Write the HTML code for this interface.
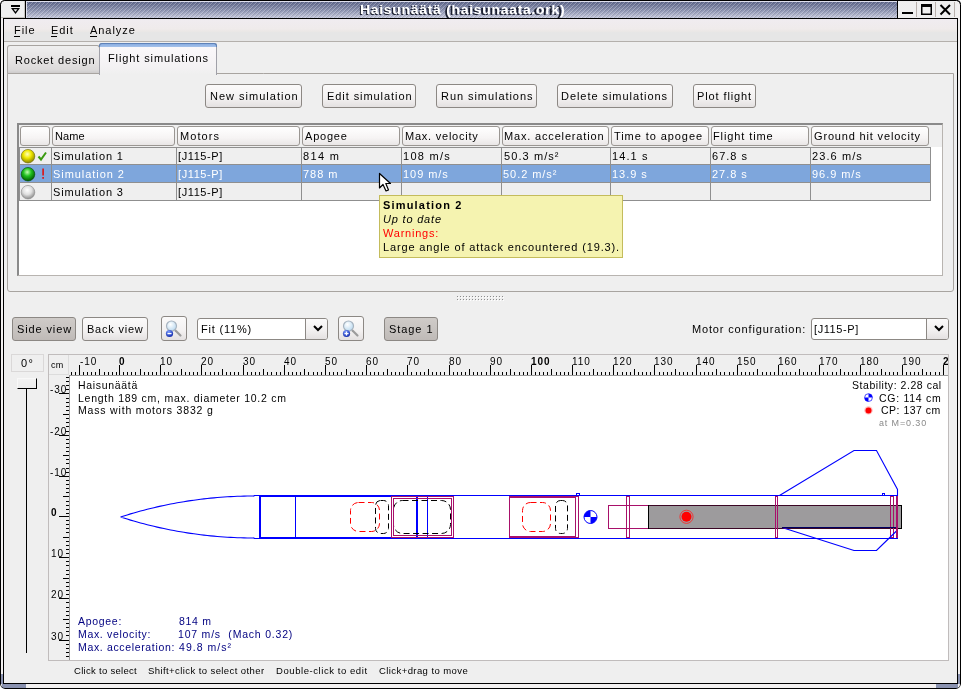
<!DOCTYPE html>
<html><head><meta charset="utf-8"><style>
*{box-sizing:border-box;margin:0;padding:0}
html,body{width:961px;height:689px;overflow:hidden;background:#efefef;position:relative;font-family:"Liberation Sans",sans-serif;color:#000}
.a{position:absolute}
.t{will-change:transform;position:absolute;white-space:nowrap;font-size:11px;line-height:13px;letter-spacing:0.95px}
.blk{position:absolute;background:#000}
.btn{position:absolute;border:1px solid #8c8884;border-radius:3px;background:linear-gradient(#fbfafa,#f3f1f1 60%,#e4e1e1)}
.btnp{position:absolute;border:1px solid #8c8884;border-radius:3px;background:linear-gradient(#cfcbc8,#c6c2bf 60%,#bfbab7)}
.hdr{position:absolute;top:126px;height:20px;border:1px solid #9a9692;border-radius:3px;background:linear-gradient(#ffffff,#f6f4f4 60%,#e9e6e6)}
.vl{position:absolute;width:1px;background:#8f8f8f}
.hl{position:absolute;height:1px;background:#8f8f8f}
.rl{will-change:transform;position:absolute;white-space:nowrap;font-size:10px;line-height:11px;letter-spacing:0.9px}
.fig{will-change:transform;position:absolute;white-space:nowrap;font-size:10.5px;line-height:12px;letter-spacing:0.4px}
</style></head><body>

<!-- window frame -->
<div class="a" style="left:0;top:0;width:961px;height:689px;background:#efefef"></div>
<svg class="a" style="left:0;top:0" width="961" height="689" shape-rendering="crispEdges">
 <rect x="0" y="0" width="961" height="689" fill="#f2f0f0"/>
 <rect x="1" y="674" width="2" height="10" fill="#8a92b0"/>
 <rect x="2" y="684" width="24" height="4" fill="#8a92b0"/>
 <rect x="958" y="674" width="2" height="10" fill="#8a92b0"/>
 <rect x="936" y="684" width="22" height="4" fill="#8a92b0"/>
 <rect x="5" y="0" width="951" height="1" fill="#000"/>
 <rect x="0" y="5" width="1" height="679" fill="#000"/>
 <rect x="960" y="5" width="1" height="679" fill="#000"/>
 <rect x="5" y="688" width="951" height="1" fill="#000"/>
 <rect x="3" y="18" width="1" height="666" fill="#000"/>
 <rect x="957" y="18" width="1" height="666" fill="#000"/>
 <rect x="3" y="18" width="955" height="1" fill="#000"/>
 <rect x="3" y="683" width="955" height="1" fill="#000"/>
</svg>
<svg class="a" style="left:0;top:0" width="961" height="689">
 <path d="M0.5,5 Q0.5,0.5 5,0.5" stroke="#000" fill="none"/>
 <path d="M956,0.5 Q960.5,0.5 960.5,5" stroke="#000" fill="none"/>
 <path d="M0.5,684 Q0.5,688.5 5,688.5" stroke="#000" fill="none"/>
 <path d="M956,688.5 Q960.5,688.5 960.5,684" stroke="#000" fill="none"/>
 <path d="M0,0 H5 Q0.5,0.5 0,5 Z M961,0 H956 Q960.5,0.5 961,5 Z M0,689 H5 Q0.5,688.5 0,684 Z M961,689 H956 Q960.5,688.5 961,684 Z" fill="#fff"/>
</svg>
<div class="a" style="left:4px;top:19px;width:953px;height:664px;background:#efefef"></div>

<!-- title bar -->
<div class="a" style="left:1px;top:1px;width:24px;height:17px;background:#efefef;border-right:1px solid #c8c4c0;border-bottom:1px solid #c8c4c0"></div>
<div class="blk" style="left:25px;top:1px;width:1px;height:17px"></div>
<div class="a" style="left:26px;top:1px;width:871px;height:17px;background:linear-gradient(#5a6388,#8990ae 50%,#c6c9dc)"></div>
<svg class="a" style="left:26px;top:1px" width="871" height="17"><defs><pattern id="hp" width="4" height="4" patternUnits="userSpaceOnUse"><rect x="3" y="0" width="1" height="1" fill="#fff" fill-opacity=".25"/><rect x="2" y="1" width="1" height="1" fill="#fff" fill-opacity=".25"/><rect x="1" y="2" width="1" height="1" fill="#fff" fill-opacity=".25"/><rect x="0" y="3" width="1" height="1" fill="#fff" fill-opacity=".25"/><rect x="0" y="0" width="1" height="1" fill="#000" fill-opacity=".10"/><rect x="3" y="1" width="1" height="1" fill="#000" fill-opacity=".10"/><rect x="2" y="2" width="1" height="1" fill="#000" fill-opacity=".10"/><rect x="1" y="3" width="1" height="1" fill="#000" fill-opacity=".10"/></pattern></defs><rect width="871" height="17" fill="url(#hp)"/><rect x="0" y="0" width="871" height="1" fill="#dfe0ee"/><rect x="0" y="0" width="1" height="17" fill="#dfe0ee"/></svg>
<div class="blk" style="left:897px;top:1px;width:1px;height:17px"></div>
<div class="a" style="left:898px;top:1px;width:59px;height:17px;background:#efefef"></div>
<div class="a" style="left:916px;top:2px;width:1px;height:15px;background:#b8b0ac"></div>
<div class="a" style="left:935px;top:2px;width:1px;height:15px;background:#b8b0ac"></div>
<div class="a" style="left:954px;top:2px;width:1px;height:15px;background:#b8b0ac"></div>

<!-- title glyphs -->
<svg class="a" style="left:0;top:0" width="30" height="19">
 <path d="M0.5,4.5 Q0.5,0.5 4.5,0.5" stroke="#000" fill="none"/>
 <rect x="11" y="5" width="9" height="2" fill="#000"/>
 <path d="M11,8 L20,8 L15.5,14 Z" fill="#000"/>
 <path d="M13.5,9.3 L17.5,9.3 L15.5,11.8 Z" fill="#efefef"/>
</svg>
<svg class="a" style="left:895px;top:0" width="66" height="19">
 <path d="M62,0.5 Q65.5,0.5 65.5,4" stroke="#000" fill="none"/>
 <rect x="7" y="12" width="11" height="2" fill="#000"/>
 <rect x="26" y="4" width="11" height="11" fill="#000"/>
 <rect x="27.5" y="7" width="8" height="6.5" fill="#efefef"/>
 <path d="M45.5,5 L55,14.5 M55,5 L45.5,14.5" stroke="#000" stroke-width="2"/>
</svg>
<div id="x1" class="t" style="left:359px;top:4px;font-weight:bold;font-size:12px;line-height:14px;letter-spacing:0.542px;color:#1c2030;transform:scaleX(1.165);transform-origin:0 0">Haisunäätä (haisunaata.ork)</div>
<div id="x2" class="t" style="left:360px;top:3px;font-weight:bold;font-size:12px;line-height:14px;letter-spacing:0.6px;color:#fff;transform:scaleX(1.165);transform-origin:0 0">Haisunäätä (haisunaata.ork)</div>

<!-- menu bar -->
<div class="a" style="left:4px;top:19px;width:953px;height:22px;background:linear-gradient(#f0ecf0,#efebeb 45%,#ebe8e6 55%,#e6e6e6 62%,#e6e6e6)"></div>
<div class="a" style="left:4px;top:41px;width:953px;height:1px;background:#b4b0ac"></div>
<div id="x3" class="t" style="left:14px;top:24px">File</div>
<div class="a" style="left:14px;top:36px;width:6px;height:1px;background:#000"></div>
<div id="x4" class="t" style="left:51px;top:24px">Edit</div>
<div class="a" style="left:51px;top:36px;width:6px;height:1px;background:#000"></div>
<div id="x5" class="t" style="left:90px;top:24px">Analyze</div>
<div class="a" style="left:90px;top:36px;width:7px;height:1px;background:#000"></div>

<!-- tabs -->
<div class="a" style="left:7px;top:45px;width:93px;height:29px;border:1px solid #a8a4a0;border-bottom:none;border-radius:3px 3px 0 0;background:linear-gradient(#efefef,#e6e4e4 50%,#dcdada 85%,#c9c7c7)"></div>
<div id="x6" class="t" style="left:15px;top:54px;letter-spacing:0.825px">Rocket design</div>
<!-- panel -->
<div class="a" style="left:7px;top:73px;width:947px;height:219px;border:1px solid #a8a4a0;border-top:1px solid #a8a4a0;border-radius:0 0 3px 3px;background:#efefef"></div>
<div class="a" style="left:99px;top:43px;width:118px;height:32px;border:1px solid #a0a0a8;border-bottom:none;border-radius:3px 3px 0 0;background:linear-gradient(#fbf9fb,#f4f2f4 70%,#efefef)"></div>
<div class="a" style="left:99px;top:43px;width:118px;height:4px;border:1px solid #5f82b8;border-bottom:none;border-radius:3px 3px 0 0;background:linear-gradient(#8aaee2,#a6c2ea)"></div>
<div id="x7" class="t" style="left:108px;top:52px;letter-spacing:0.891px">Flight simulations</div>

<!-- buttons -->
<div class="btn" style="left:205px;top:84px;width:97px;height:24px"></div>
<div id="x8" class="t" style="left:210px;top:90px;letter-spacing:1.003px">New simulation</div>
<div class="btn" style="left:322px;top:84px;width:94px;height:24px"></div>
<div id="x9" class="t" style="left:327px;top:90px;letter-spacing:0.932px">Edit simulation</div>
<div class="btn" style="left:436px;top:84px;width:101px;height:24px"></div>
<div id="x10" class="t" style="left:441px;top:90px;letter-spacing:0.942px">Run simulations</div>
<div class="btn" style="left:557px;top:84px;width:116px;height:24px"></div>
<div id="x11" class="t" style="left:561px;top:90px;letter-spacing:0.950px">Delete simulations</div>
<div class="btn" style="left:693px;top:84px;width:63px;height:24px"></div>
<div id="x12" class="t" style="left:697px;top:90px;letter-spacing:0.890px">Plot flight</div>
<!-- table -->
<div class="a" style="left:17px;top:123px;width:926px;height:153px;background:#fff;border-left:2px solid #8a8a8a;border-top:2px solid #8a8a8a;border-right:1px solid #b8b4b0;border-bottom:1px solid #b8b4b0"></div>
<div class="a" style="left:19px;top:125px;width:923px;height:22px;background:#efefef"></div>
<div class="hdr" style="left:20px;width:30px"></div>
<div class="hdr" style="left:52px;width:123px"></div>
<div id="x13" class="t" style="left:55px;top:130px;letter-spacing:0.117px">Name</div>
<div class="hdr" style="left:177px;width:123px"></div>
<div id="x14" class="t" style="left:180px;top:130px;letter-spacing:1.090px">Motors</div>
<div class="hdr" style="left:302px;width:98px"></div>
<div id="x15" class="t" style="left:305px;top:130px;letter-spacing:0.790px">Apogee</div>
<div class="hdr" style="left:402px;width:98px"></div>
<div id="x16" class="t" style="left:405px;top:130px;letter-spacing:0.767px">Max. velocity</div>
<div class="hdr" style="left:502px;width:107px"></div>
<div id="x17" class="t" style="left:504px;top:130px;letter-spacing:0.831px">Max. acceleration</div>
<div class="hdr" style="left:611px;width:98px"></div>
<div id="x18" class="t" style="left:614px;top:130px;letter-spacing:0.926px">Time to apogee</div>
<div class="hdr" style="left:711px;width:98px"></div>
<div id="x19" class="t" style="left:713px;top:130px;letter-spacing:0.900px">Flight time</div>
<div class="hdr" style="left:811px;width:118px"></div>
<div id="x20" class="t" style="left:814px;top:130px;letter-spacing:0.834px">Ground hit velocity</div>
<div class="a" style="left:19px;top:147px;width:912px;height:18px;background:#efefef"></div>
<div id="x21" class="t" style="left:53px;top:150px;color:#000;letter-spacing:0.849px">Simulation 1</div>
<div id="x22" class="t" style="left:178px;top:150px;color:#000;letter-spacing:0.593px">[J115-P]</div>
<div id="x23" class="t" style="left:303px;top:150px;color:#000;letter-spacing:1.350px">814 m</div>
<div id="x24" class="t" style="left:403px;top:150px;color:#000;letter-spacing:1.283px">108 m/s</div>
<div id="x25" class="t" style="left:504px;top:150px;color:#000;letter-spacing:1.086px">50.3 m/s²</div>
<div id="x26" class="t" style="left:612px;top:150px;color:#000;letter-spacing:1.110px">14.1 s</div>
<div id="x27" class="t" style="left:712px;top:150px;color:#000;letter-spacing:1.010px">67.8 s</div>
<div id="x28" class="t" style="left:812px;top:150px;color:#000;letter-spacing:1.093px">23.6 m/s</div>
<div class="a" style="left:19px;top:165px;width:912px;height:18px;background:#7ea6dc"></div>
<div id="x29" class="t" style="left:53px;top:168px;color:#fff;letter-spacing:0.940px">Simulation 2</div>
<div id="x30" class="t" style="left:178px;top:168px;color:#fff;letter-spacing:0.593px">[J115-P]</div>
<div id="x31" class="t" style="left:303px;top:168px;color:#fff">788 m</div>
<div id="x32" class="t" style="left:403px;top:168px;color:#fff">109 m/s</div>
<div id="x33" class="t" style="left:503px;top:168px;color:#fff">50.2 m/s²</div>
<div id="x34" class="t" style="left:612px;top:168px;color:#fff">13.9 s</div>
<div id="x35" class="t" style="left:712px;top:168px;color:#fff">27.8 s</div>
<div id="x36" class="t" style="left:812px;top:168px;color:#fff">96.9 m/s</div>
<div class="a" style="left:19px;top:183px;width:912px;height:18px;background:#efefef"></div>
<div id="x37" class="t" style="left:53px;top:186px;color:#000;letter-spacing:0.849px">Simulation 3</div>
<div id="x38" class="t" style="left:178px;top:186px;color:#000;letter-spacing:0.593px">[J115-P]</div>
<div class="hl" style="left:19px;top:147px;width:912px"></div>
<div class="hl" style="left:19px;top:164px;width:912px"></div>
<div class="hl" style="left:19px;top:182px;width:912px"></div>
<div class="hl" style="left:19px;top:200px;width:912px"></div>
<div class="vl" style="left:51px;top:147px;height:54px"></div>
<div class="vl" style="left:176px;top:147px;height:54px"></div>
<div class="vl" style="left:301px;top:147px;height:54px"></div>
<div class="vl" style="left:401px;top:147px;height:54px"></div>
<div class="vl" style="left:501px;top:147px;height:54px"></div>
<div class="vl" style="left:610px;top:147px;height:54px"></div>
<div class="vl" style="left:710px;top:147px;height:54px"></div>
<div class="vl" style="left:810px;top:147px;height:54px"></div>
<div class="vl" style="left:930px;top:147px;height:54px"></div>
<div class="vl" style="left:19px;top:147px;height:54px"></div>

<!-- status icons -->
<svg class="a" style="left:19px;top:147px" width="32" height="54">
 <defs>
  <radialGradient id="gy" cx="0.45" cy="0.35" r="0.65"><stop offset="0" stop-color="#ffffc0"/><stop offset="0.45" stop-color="#f0e800"/><stop offset="1" stop-color="#8a8400"/></radialGradient>
  <radialGradient id="gg" cx="0.45" cy="0.35" r="0.65"><stop offset="0" stop-color="#c0ffb0"/><stop offset="0.45" stop-color="#20c020"/><stop offset="1" stop-color="#005a00"/></radialGradient>
  <radialGradient id="gw" cx="0.45" cy="0.35" r="0.65"><stop offset="0" stop-color="#ffffff"/><stop offset="0.5" stop-color="#e0e0e0"/><stop offset="1" stop-color="#8c8c8c"/></radialGradient>
 </defs>
 <circle cx="9" cy="9.2" r="6.8" fill="url(#gy)" stroke="#6a6600" stroke-width="0.6"/>
 <circle cx="9" cy="27.2" r="6.8" fill="url(#gg)" stroke="#004a00" stroke-width="0.6"/>
 <circle cx="9" cy="45.2" r="6.8" fill="url(#gw)" stroke="#8a8a8a" stroke-width="0.6"/>
 <path d="M19.5,9.5 L22,12.5 L27,5.5" stroke="#3a9a10" stroke-width="2" fill="none"/>
 <rect x="23.3" y="21.5" width="1.6" height="7" fill="#e01010"/>
 <rect x="23.3" y="30" width="1.6" height="1.8" fill="#e01010"/>
</svg>

<!-- tooltip -->
<div class="a" style="left:379px;top:195px;width:244px;height:63px;background:#f5f3b0;border:1px solid #c4bc5c"></div>
<div id="x39" class="t" style="left:383px;top:199px;font-weight:bold;letter-spacing:1.182px">Simulation 2</div>
<div id="x40" class="t" style="left:383px;top:213px;font-style:italic;letter-spacing:0.806px">Up to date</div>
<div id="x41" class="t" style="left:383px;top:227px;color:#ff0000;letter-spacing:0.775px">Warnings:</div>
<div id="x42" class="t" style="left:383px;top:241px;letter-spacing:0.859px">Large angle of attack encountered (19.3).</div>

<!-- cursor -->
<svg class="a" style="left:378px;top:172px" width="16" height="22">
 <path d="M1.5,1.5 L1.5,16 L5,12.5 L8,19 L10.5,18 L7.8,11.5 L12.5,11.5 Z" fill="#fff" stroke="#000" stroke-width="1.2" stroke-linejoin="round"/>
</svg>

<!-- splitter dots -->
<svg class="a" style="left:457px;top:296px" width="48" height="6">
 <defs><pattern id="dp" width="3" height="3" patternUnits="userSpaceOnUse"><rect x="0" y="0" width="1" height="1" fill="#8c8c8c"/><rect x="1" y="1" width="1" height="1" fill="#fff"/></pattern></defs>
 <rect x="0" y="0" width="48" height="5" fill="url(#dp)"/>
</svg>

<!-- toolbar -->
<div class="btnp" style="left:12px;top:317px;width:64px;height:24px"></div>
<div id="x43" class="t" style="left:17px;top:323px;letter-spacing:0.875px">Side view</div>
<div class="btn" style="left:82px;top:317px;width:66px;height:24px"></div>
<div id="x44" class="t" style="left:87px;top:323px;letter-spacing:0.775px">Back view</div>
<div class="btn" style="left:161px;top:316px;width:26px;height:25px"></div>
<div class="a" style="left:197px;top:318px;width:131px;height:22px;border:1px solid #8c8884;border-radius:3px;background:#fff"></div>
<div class="a" style="left:305px;top:319px;width:22px;height:20px;border-left:1px solid #8c8884;border-radius:0 2px 2px 0;background:linear-gradient(#fbfafa,#f1efef 60%,#e4e1e1)"></div>
<svg class="a" style="left:311px;top:323px" width="14" height="10"><path d="M3,3 L7,7 L11,3" stroke="#000" stroke-width="2" fill="none"/></svg>
<div id="x45" class="t" style="left:201px;top:323px;letter-spacing:0.8px">Fit (11%)</div>
<div class="btn" style="left:338px;top:316px;width:26px;height:25px"></div>
<div class="btnp" style="left:384px;top:317px;width:54px;height:24px"></div>
<div id="x46" class="t" style="left:389px;top:323px;letter-spacing:0.933px">Stage 1</div>
<div id="x47" class="t" style="left:692px;top:323px;letter-spacing:0.845px">Motor configuration:</div>
<div class="a" style="left:811px;top:318px;width:138px;height:22px;border:1px solid #8c8884;border-radius:3px;background:#fff"></div>
<div class="a" style="left:926px;top:319px;width:22px;height:20px;border-left:1px solid #8c8884;border-radius:0 2px 2px 0;background:linear-gradient(#fbfafa,#f1efef 60%,#e4e1e1)"></div>
<svg class="a" style="left:932px;top:323px" width="14" height="10"><path d="M3,3 L7,7 L11,3" stroke="#000" stroke-width="2" fill="none"/></svg>
<div id="x48" class="t" style="left:814px;top:323px;letter-spacing:0.586px">[J115-P]</div>
<svg class="a" style="left:161px;top:316px" width="26" height="25">
 <defs><radialGradient id="gl" cx="0.4" cy="0.35" r="0.7"><stop offset="0" stop-color="#ffffff"/><stop offset="1" stop-color="#b8d8f0"/></radialGradient>
 <radialGradient id="gb" cx="0.4" cy="0.3" r="0.8"><stop offset="0" stop-color="#80a0ff"/><stop offset="1" stop-color="#0018a0"/></radialGradient></defs>
 <path d="M14.5,14.5 L19.5,19.5" stroke="#9c9c9c" stroke-width="2.2" stroke-linecap="round"/>
 <circle cx="10.5" cy="10" r="5" fill="url(#gl)" stroke="#a8b4c0" stroke-width="1.2"/>
 <circle cx="8.5" cy="17.5" r="3.6" fill="url(#gb)"/>
 <rect x="6.5" y="17" width="4" height="1.2" fill="#fff"/>
</svg>
<svg class="a" style="left:338px;top:316px" width="26" height="25">
 <path d="M14.5,14.5 L19.5,19.5" stroke="#9c9c9c" stroke-width="2.2" stroke-linecap="round"/>
 <circle cx="10.5" cy="10" r="5" fill="url(#gl)" stroke="#a8b4c0" stroke-width="1.2"/>
 <circle cx="8.5" cy="17.5" r="3.6" fill="url(#gb)"/>
 <rect x="6.5" y="17" width="4" height="1.2" fill="#fff"/>
 <rect x="7.9" y="15.5" width="1.2" height="4" fill="#fff"/>
</svg>

<!-- angle box & slider -->
<div class="a" style="left:11px;top:354px;width:33px;height:18px;border:1px solid #dad8d8;background:#efefef"></div>
<div id="x49" class="t" style="left:21px;top:357px;letter-spacing:1.3px">0°</div>
<div class="a" style="left:26px;top:378px;width:1px;height:275px;background:#000"></div>
<div class="a" style="left:17px;top:378px;width:20px;height:11px;background:linear-gradient(#f2f2f2,#ececec);border-right:1px solid #000;border-bottom:1px solid #000;border-top:1px solid #f8f8f8;border-left:1px solid #f8f8f8"></div>

<!-- ruler frame -->
<div class="a" style="left:48px;top:354px;width:901px;height:307px;border:1px solid #c0bcbc;background:#efefef"></div>
<div class="a" style="left:70px;top:376px;width:878px;height:284px;background:#fff"></div>
<div class="a" style="left:69px;top:375px;width:879px;height:1px;background:#999"></div>
<div class="a" style="left:69px;top:375px;width:1px;height:285px;background:#999"></div>
<div class="a" style="left:68px;top:355px;width:1px;height:20px;background:#dcdcdc"></div>
<div class="a" style="left:49px;top:374px;width:20px;height:1px;background:#dcdcdc"></div>
<div id="x50" class="t" style="left:51px;top:359px;font-size:9px;letter-spacing:0.2px">cm</div>
<!-- rulers -->
<svg class="a" style="left:0;top:0" width="961" height="689" shape-rendering="crispEdges">
<path d="M71.5,372V375 M75.5,372V375 M79.5,365V375 M83.5,372V375 M87.5,372V375 M91.5,372V375 M95.5,372V375 M99.5,369V375 M104.5,372V375 M108.5,372V375 M112.5,372V375 M116.5,372V375 M119.5,365V375 M123.5,372V375 M127.5,372V375 M131.5,372V375 M135.5,372V375 M140.5,369V375 M144.5,372V375 M148.5,372V375 M152.5,372V375 M156.5,372V375 M160.5,365V375 M164.5,372V375 M168.5,372V375 M173.5,372V375 M177.5,372V375 M181.5,369V375 M185.5,372V375 M189.5,372V375 M193.5,372V375 M197.5,372V375 M201.5,365V375 M205.5,372V375 M210.5,372V375 M214.5,372V375 M218.5,372V375 M222.5,369V375 M226.5,372V375 M230.5,372V375 M234.5,372V375 M238.5,372V375 M243.5,365V375 M247.5,372V375 M251.5,372V375 M255.5,372V375 M259.5,372V375 M263.5,369V375 M267.5,372V375 M271.5,372V375 M276.5,372V375 M280.5,372V375 M284.5,365V375 M288.5,372V375 M292.5,372V375 M296.5,372V375 M300.5,372V375 M304.5,369V375 M308.5,372V375 M313.5,372V375 M317.5,372V375 M321.5,372V375 M325.5,365V375 M329.5,372V375 M333.5,372V375 M337.5,372V375 M341.5,372V375 M346.5,369V375 M350.5,372V375 M354.5,372V375 M358.5,372V375 M362.5,372V375 M366.5,365V375 M370.5,372V375 M374.5,372V375 M378.5,372V375 M383.5,372V375 M387.5,369V375 M391.5,372V375 M395.5,372V375 M399.5,372V375 M403.5,372V375 M407.5,365V375 M411.5,372V375 M416.5,372V375 M420.5,372V375 M424.5,372V375 M428.5,369V375 M432.5,372V375 M436.5,372V375 M440.5,372V375 M444.5,372V375 M449.5,365V375 M453.5,372V375 M457.5,372V375 M461.5,372V375 M465.5,372V375 M469.5,369V375 M473.5,372V375 M477.5,372V375 M481.5,372V375 M486.5,372V375 M490.5,365V375 M494.5,372V375 M498.5,372V375 M502.5,372V375 M506.5,372V375 M510.5,369V375 M514.5,372V375 M519.5,372V375 M523.5,372V375 M527.5,372V375 M531.5,365V375 M535.5,372V375 M539.5,372V375 M543.5,372V375 M547.5,372V375 M551.5,369V375 M556.5,372V375 M560.5,372V375 M564.5,372V375 M568.5,372V375 M572.5,365V375 M576.5,372V375 M580.5,372V375 M584.5,372V375 M589.5,372V375 M593.5,369V375 M597.5,372V375 M601.5,372V375 M605.5,372V375 M609.5,372V375 M613.5,365V375 M617.5,372V375 M622.5,372V375 M626.5,372V375 M630.5,372V375 M634.5,369V375 M638.5,372V375 M642.5,372V375 M646.5,372V375 M650.5,372V375 M654.5,365V375 M659.5,372V375 M663.5,372V375 M667.5,372V375 M671.5,372V375 M675.5,369V375 M679.5,372V375 M683.5,372V375 M687.5,372V375 M692.5,372V375 M696.5,365V375 M700.5,372V375 M704.5,372V375 M708.5,372V375 M712.5,372V375 M716.5,369V375 M720.5,372V375 M724.5,372V375 M729.5,372V375 M733.5,372V375 M737.5,365V375 M741.5,372V375 M745.5,372V375 M749.5,372V375 M753.5,372V375 M757.5,369V375 M762.5,372V375 M766.5,372V375 M770.5,372V375 M774.5,372V375 M778.5,365V375 M782.5,372V375 M786.5,372V375 M790.5,372V375 M795.5,372V375 M799.5,369V375 M803.5,372V375 M807.5,372V375 M811.5,372V375 M815.5,372V375 M819.5,365V375 M823.5,372V375 M827.5,372V375 M832.5,372V375 M836.5,372V375 M840.5,369V375 M844.5,372V375 M848.5,372V375 M852.5,372V375 M856.5,372V375 M860.5,365V375 M865.5,372V375 M869.5,372V375 M873.5,372V375 M877.5,372V375 M881.5,369V375 M885.5,372V375 M889.5,372V375 M893.5,372V375 M897.5,372V375 M902.5,365V375 M906.5,372V375 M910.5,372V375 M914.5,372V375 M918.5,372V375 M922.5,369V375 M926.5,372V375 M930.5,372V375 M935.5,372V375 M939.5,372V375 M943.5,365V375" stroke="#000" stroke-width="1" fill="none"/>
<path d="M66,377.5H69 M66,381.5H69 M66,385.5H69 M66,389.5H69 M59,393.5H69 M66,398.5H69 M66,402.5H69 M66,406.5H69 M66,410.5H69 M63,414.5H69 M66,418.5H69 M66,422.5H69 M66,426.5H69 M66,431.5H69 M59,435.5H69 M66,439.5H69 M66,443.5H69 M66,447.5H69 M66,451.5H69 M63,455.5H69 M66,459.5H69 M66,463.5H69 M66,468.5H69 M66,472.5H69 M59,476.5H69 M66,480.5H69 M66,484.5H69 M66,488.5H69 M66,492.5H69 M63,496.5H69 M66,501.5H69 M66,505.5H69 M66,509.5H69 M66,513.5H69 M59,516.5H69 M66,520.5H69 M66,524.5H69 M66,528.5H69 M66,532.5H69 M63,537.5H69 M66,541.5H69 M66,545.5H69 M66,549.5H69 M66,553.5H69 M59,557.5H69 M66,561.5H69 M66,565.5H69 M66,570.5H69 M66,574.5H69 M63,578.5H69 M66,582.5H69 M66,586.5H69 M66,590.5H69 M66,594.5H69 M59,598.5H69 M66,602.5H69 M66,607.5H69 M66,611.5H69 M66,615.5H69 M63,619.5H69 M66,623.5H69 M66,627.5H69 M66,631.5H69 M66,635.5H69 M59,640.5H69 M66,644.5H69 M66,648.5H69 M66,652.5H69 M66,656.5H69" stroke="#000" stroke-width="1" fill="none"/>
</svg>
<div class="a" style="left:70px;top:0;width:878px;height:376px;overflow:hidden">
<div id="x51" class="rl" style="left:10px;top:356px;">-10</div>
<div id="x52" class="rl" style="left:49px;top:356px;font-weight:bold;">0</div>
<div id="x53" class="rl" style="left:90px;top:356px;">10</div>
<div id="x54" class="rl" style="left:131px;top:356px;">20</div>
<div id="x55" class="rl" style="left:173px;top:356px;">30</div>
<div id="x56" class="rl" style="left:214px;top:356px;">40</div>
<div id="x57" class="rl" style="left:255px;top:356px;">50</div>
<div id="x58" class="rl" style="left:296px;top:356px;">60</div>
<div id="x59" class="rl" style="left:337px;top:356px;">70</div>
<div id="x60" class="rl" style="left:379px;top:356px;">80</div>
<div id="x61" class="rl" style="left:420px;top:356px;">90</div>
<div id="x62" class="rl" style="left:461px;top:356px;font-weight:bold;">100</div>
<div id="x63" class="rl" style="left:502px;top:356px;">110</div>
<div id="x64" class="rl" style="left:543px;top:356px;">120</div>
<div id="x65" class="rl" style="left:584px;top:356px;">130</div>
<div id="x66" class="rl" style="left:626px;top:356px;">140</div>
<div id="x67" class="rl" style="left:667px;top:356px;">150</div>
<div id="x68" class="rl" style="left:708px;top:356px;">160</div>
<div id="x69" class="rl" style="left:749px;top:356px;">170</div>
<div id="x70" class="rl" style="left:790px;top:356px;">180</div>
<div id="x71" class="rl" style="left:832px;top:356px;">190</div>
<div id="x72" class="rl" style="left:873px;top:356px;font-weight:bold;">200</div>
</div>
<div id="x73" class="rl" style="left:50px;top:384px;">-30</div>
<div id="x74" class="rl" style="left:50px;top:426px;">-20</div>
<div id="x75" class="rl" style="left:50px;top:467px;">-10</div>
<div id="x76" class="rl" style="left:51px;top:507px;font-weight:bold;">0</div>
<div id="x77" class="rl" style="left:51px;top:548px;">10</div>
<div id="x78" class="rl" style="left:51px;top:589px;">20</div>
<div id="x79" class="rl" style="left:51px;top:631px;">30</div>
<!-- rocket -->
<svg class="a" style="left:70px;top:376px" width="878" height="284"><g transform="translate(-70,-376)" fill="none">
<path d="M120.5,517.00 L123.8,515.94 L127.2,514.91 L130.5,513.90 L133.8,512.93 L137.2,511.98 L140.5,511.07 L143.9,510.18 L147.2,509.32 L150.5,508.49 L153.9,507.68 L157.2,506.91 L160.6,506.16 L163.9,505.44 L167.2,504.75 L170.6,504.08 L173.9,503.44 L177.2,502.83 L180.6,502.24 L183.9,501.69 L187.2,501.15 L190.6,500.65 L193.9,500.17 L197.3,499.72 L200.6,499.29 L203.9,498.89 L207.3,498.52 L210.6,498.17 L213.9,497.85 L217.3,497.55 L220.6,497.28 L224.0,497.04 L227.3,496.82 L230.6,496.63 L234.0,496.46 L237.3,496.32 L240.7,496.20 L244.0,496.12 L247.3,496.05 L250.7,496.01 L254.0,496.00 M120.5,517.00 L123.8,518.06 L127.2,519.09 L130.5,520.10 L133.8,521.07 L137.2,522.02 L140.5,522.93 L143.9,523.82 L147.2,524.68 L150.5,525.51 L153.9,526.32 L157.2,527.09 L160.6,527.84 L163.9,528.56 L167.2,529.25 L170.6,529.92 L173.9,530.56 L177.2,531.17 L180.6,531.76 L183.9,532.31 L187.2,532.85 L190.6,533.35 L193.9,533.83 L197.3,534.28 L200.6,534.71 L203.9,535.11 L207.3,535.48 L210.6,535.83 L213.9,536.15 L217.3,536.45 L220.6,536.72 L224.0,536.96 L227.3,537.18 L230.6,537.37 L234.0,537.54 L237.3,537.68 L240.7,537.80 L244.0,537.88 L247.3,537.95 L250.7,537.99 L254.0,538.00" stroke="#0000ff" stroke-width="1.1"/>
<path d="M254,495.5 H897.5 M254,538.5 H897.5 M259,496.5 H391 M259,537.5 H391" stroke="#0000ff" stroke-width="1" shape-rendering="crispEdges"/>
<path d="M254,496.5 V495.5 M254,537.5 V538.5" stroke="#0000ff" stroke-width="1"/>
<rect x="259" y="495" width="2" height="44" fill="#0000ff" shape-rendering="crispEdges"/>
<path d="M295.5,496 V538 M427.5,496 V538" stroke="#0000ff" stroke-width="1" shape-rendering="crispEdges"/>
<rect x="416" y="496" width="2" height="42" fill="#0000ff" shape-rendering="crispEdges"/>
<rect x="350.5" y="502.5" width="29" height="29" rx="8" stroke="#ff0000" stroke-width="1" stroke-dasharray="6 3.5"/>
<rect x="375.5" y="500.5" width="13" height="33" rx="5" stroke="#000" stroke-width="1" stroke-dasharray="6 3.5"/>
<rect x="393.5" y="500.5" width="57" height="33" rx="9" stroke="#000" stroke-width="1" stroke-dasharray="6 3.5"/>
<rect x="522.5" y="502.5" width="28" height="29" rx="8" stroke="#ff0000" stroke-width="1" stroke-dasharray="6 3.5"/>
<rect x="555.5" y="500.5" width="12" height="33" rx="5" stroke="#000" stroke-width="1" stroke-dasharray="6 3.5"/>
<g stroke="#a8106a" stroke-width="1" shape-rendering="crispEdges">
<rect x="391.5" y="496.5" width="62" height="41"/>
<rect x="393.5" y="498.5" width="58" height="37"/>
<rect x="509.5" y="496.5" width="66" height="41"/>
<path d="M509.5,497.5 H575.5 M509.5,536.5 H575.5"/>
<rect x="575.5" y="496.5" width="3" height="41"/>
<rect x="626.5" y="496.5" width="3" height="41"/>
<rect x="608.5" y="505.5" width="289" height="23"/>
<rect x="775.5" y="496.5" width="2" height="41"/>
</g>
<rect x="648.5" y="505.5" width="253" height="23" fill="#9d9b9d" stroke="#000" stroke-width="1" shape-rendering="crispEdges"/>
<g stroke="#a8106a" stroke-width="1" shape-rendering="crispEdges"><rect x="775.5" y="496.5" width="2" height="41"/><rect x="890.5" y="496.5" width="3" height="41"/><path d="M626.5,505.5V528 M629.5,505.5V528"/></g>
<rect x="576.5" y="493.5" width="3" height="2" stroke="#0000ff" stroke-width="1" shape-rendering="crispEdges"/>
<rect x="882.5" y="493.5" width="2" height="2" stroke="#0000ff" stroke-width="1" shape-rendering="crispEdges"/>
<path d="M779.5,495.5 L854,450.5 L876.5,450.5 L897.5,489.5 L897.5,496" stroke="#0000ff" stroke-width="1.1" stroke-linejoin="miter"/>
<path d="M782,527.5 L854,550.5 L876.5,550.5 L896.5,531" stroke="#0000ff" stroke-width="1.2"/>
<path d="M782,527.5 H896" stroke="#000060" stroke-width="1.2"/>
<circle cx="590.5" cy="517" r="6.5" fill="#fff" stroke="#0000ff" stroke-width="1"/>
<path d="M590.5,517 V510.5 A6.5,6.5 0 0 0 584,517 Z M590.5,517 V523.5 A6.5,6.5 0 0 0 597,517 Z" fill="#0000ff"/>
<circle cx="686.5" cy="516.8" r="6.6" fill="none" stroke="#ff2020" stroke-width="0.8"/>
<circle cx="686.5" cy="516.8" r="5" fill="#ff0000"/>
<rect x="896" y="496" width="2" height="42" fill="#a8106a" shape-rendering="crispEdges"/>
<path d="M648.5,505.5 H897 M648.5,528.5 H897" stroke="#a8106a" stroke-opacity="0.35" stroke-width="1" shape-rendering="crispEdges"/>
</g></svg>

<!-- figure texts -->
<div id="x80" class="fig" style="left:78px;top:379px;letter-spacing:0.680px">Haisunäätä</div>
<div id="x81" class="fig" style="left:78px;top:392px;letter-spacing:0.740px">Length 189 cm, max. diameter 10.2 cm</div>
<div id="x82" class="fig" style="left:78px;top:404px;letter-spacing:0.823px">Mass with motors 3832 g</div>
<div id="x83" class="fig" style="left:852px;top:379px;letter-spacing:0.542px">Stability: 2.28 cal</div>
<div id="x84" class="fig" style="left:879px;top:392px;letter-spacing:0.724px">CG: 114 cm</div>
<div id="x85" class="fig" style="left:881px;top:404px;letter-spacing:0.498px">CP: 137 cm</div>
<div id="x86" class="fig" style="left:879px;top:418px;font-size:9px;line-height:11px;letter-spacing:0.865px;color:#8a8a8a">at M=0.30</div>
<svg class="a" style="left:862px;top:392px" width="14" height="24">
 <circle cx="6.5" cy="5.6" r="3.9" fill="#fff" stroke="#0000ff" stroke-width="0.7"/>
 <path d="M6.5,5.6 V1.7 A3.9,3.9 0 0 1 10.4,5.6 Z M6.5,5.6 V9.5 A3.9,3.9 0 0 1 2.6,5.6 Z" fill="#0000ff"/>
 <circle cx="6.5" cy="18.4" r="4.2" fill="#ff9090" fill-opacity="0.6"/>
 <circle cx="6.5" cy="18.4" r="3" fill="#ff0000"/>
</svg>
<div id="x87" class="fig" style="left:78px;top:615px;color:#000080;letter-spacing:0.700px">Apogee:</div>
<div id="x88" class="fig" style="left:179px;top:615px;color:#000080;letter-spacing:0.716px">814 m</div>
<div id="x89" class="fig" style="left:78px;top:628px;color:#000080;letter-spacing:0.670px">Max. velocity:</div>
<div id="x90" class="fig" style="left:178px;top:628px;color:#000080;letter-spacing:0.795px">107 m/s&nbsp; (Mach 0.32)</div>
<div id="x91" class="fig" style="left:78px;top:641px;color:#000080;letter-spacing:0.653px">Max. acceleration:</div>
<div id="x92" class="fig" style="left:179px;top:641px;color:#000080;letter-spacing:1.043px">49.8 m/s²</div>

<!-- status bar -->
<div id="x93" class="fig" style="left:74px;top:665px;font-size:9.5px;line-height:11px;letter-spacing:0.289px">Click to select</div>
<div id="x94" class="fig" style="left:148px;top:665px;font-size:9.5px;line-height:11px;letter-spacing:0.416px">Shift+click to select other</div>
<div id="x95" class="fig" style="left:276px;top:665px;font-size:9.5px;line-height:11px;letter-spacing:0.567px">Double-click to edit</div>
<div id="x96" class="fig" style="left:379px;top:665px;font-size:9.5px;line-height:11px;letter-spacing:0.418px">Click+drag to move</div>
</body></html>
